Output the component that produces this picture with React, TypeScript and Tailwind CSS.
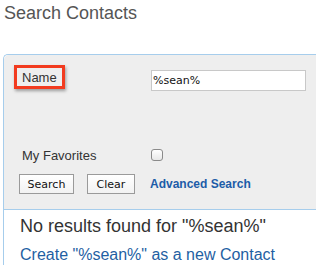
export default function App() {
  return (
    <div className="w-[316px] h-[265px] overflow-hidden bg-white" style={{ fontFamily: '"Liberation Sans", Arial, sans-serif' }}>
      <div className="pl-[4px] pt-[3px] text-[18px] leading-[21px] text-[#555]">Search Contacts</div>
      <div className="mt-[30px] ml-[3px] w-[400px] border-l border-t border-[#a6cdec] rounded-tl-[5px]">
        <div className="bg-[#eeeeee] border-b border-[#a6cdec] rounded-tl-[5px] pt-[15px] pb-[15px] pl-[18px]">
          <div className="flex items-start">
            <div className="w-[129px] flex">
              <div className="relative text-[13px] leading-[15px] text-[#333]">
                Name
                <div className="absolute -left-[8px] -right-[8px] -top-[5px] -bottom-[4px] border-[3px] border-[#f23b1f] shadow-[1px_2px_3px_rgba(0,0,0,0.35)]" />
              </div>
            </div>
            <div className="w-[155px] h-[21px] bg-white border border-[#c8c8c8] flex items-center pl-[1px] text-[11px] leading-[13px] text-[#111]" style={{ fontFamily: '"DejaVu Sans", sans-serif' }}>
              %sean%
            </div>
          </div>
          <div className="flex items-center mt-[58px] h-[12px]">
            <div className="w-[129px] text-[13px] leading-[15px] text-[#333]">My Favorites</div>
            <div className="w-[12px] h-[12px] rounded-[3px] border border-[#8a8a8a] bg-gradient-to-b from-white to-[#e8e8e8]" />
          </div>
          <div className="flex items-center mt-[13px] -ml-[3px] h-[20px]">
            <div className="w-[55px] h-[20px] border border-[#9a9a9a] bg-gradient-to-b from-white to-[#f2f2f2] flex items-center justify-center text-[11px] leading-[13px] text-[#111]" style={{ fontFamily: '"DejaVu Sans", sans-serif' }}>
              Search
            </div>
            <div className="ml-[13px] w-[48px] h-[20px] border border-[#9a9a9a] bg-gradient-to-b from-white to-[#f2f2f2] flex items-center justify-center text-[11px] leading-[13px] text-[#111]" style={{ fontFamily: '"DejaVu Sans", sans-serif' }}>
              Clear
            </div>
            <div className="ml-[15px] text-[12px] leading-[14px] font-bold text-[#1c5ca8]">Advanced Search</div>
          </div>
        </div>
        <div className="pl-[16px] pt-[6px] pb-[20px] bg-white">
          <div className="text-[18px] leading-[21px] text-[#333]">No results found for "%sean%"</div>
          <div className="mt-[8px] text-[16px] leading-[19px] text-[#1f5fa3]">Create "%sean%" as a new Contact</div>
        </div>
      </div>
    </div>
  );
}
